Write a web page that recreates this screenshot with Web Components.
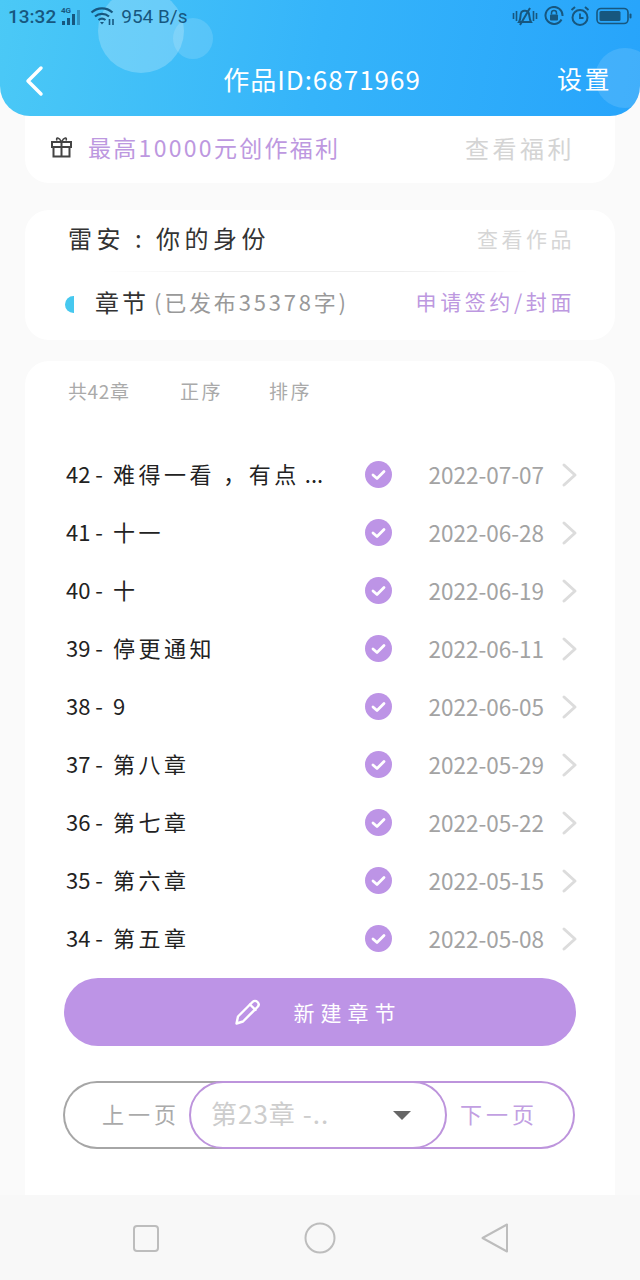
<!DOCTYPE html>
<html lang="zh">
<head>
<meta charset="utf-8">
<title>作品</title>
<style>
  html, body { margin: 0; padding: 0; background: #fafafa; }
  body {
    width: 640px;
    height: 1280px;
    overflow: hidden;
    display: flex;
    flex-direction: column;
    font-family: "Noto Sans CJK SC", "Noto Sans", sans-serif;
  }
  main { flex: 1; display: flex; flex-direction: column; min-height: 0; }
</style>
</head>
<body>
<top-bar title-text="作品ID:6871969" action="设置"></top-bar>
<main>
  <bonus-card></bonus-card>
  <work-card></work-card>
  <chapter-card>
    <chapter-row num="42 -" name="难得一看 ，有点" tail=" ..." date="2022-07-07"></chapter-row>
    <chapter-row num="41 -" name="十一" date="2022-06-28"></chapter-row>
    <chapter-row num="40 -" name="十" date="2022-06-19"></chapter-row>
    <chapter-row num="39 -" name="停更通知" date="2022-06-11"></chapter-row>
    <chapter-row num="38 -" name="9" date="2022-06-05"></chapter-row>
    <chapter-row num="37 -" name="第八章" date="2022-05-29"></chapter-row>
    <chapter-row num="36 -" name="第七章" date="2022-05-22"></chapter-row>
    <chapter-row num="35 -" name="第六章" date="2022-05-15"></chapter-row>
    <chapter-row num="34 -" name="第五章" date="2022-05-08"></chapter-row>
  </chapter-card>
</main>
<nav-bar></nav-bar>

<script>
customElements.define(
  "status-bar",
  class StatusBar extends HTMLElement {
    constructor() {
      super();
      this.attachShadow({ mode: "open" });
      this.shadowRoot.innerHTML = `
      <style>
        :host {
          display: flex;
          align-items: center;
          height: 32px;
          padding: 0 8px;
          color: #17577f;
          font: 19px Roboto, sans-serif;
        }
        .time { font-weight: 500; margin-right: 4px; }
        .speed { margin-left: 5px; }
        .right { margin-left: auto; display: flex; align-items: center; }
        svg { display: block; }
      </style>
      <span class="time">13:32</span>
      <svg width="24" height="20" viewBox="0 0 24 20">
        <text x="1" y="7" font-size="8" font-weight="700" font-family="Roboto" fill="#17577f">4G</text>
        <g fill="#17577f">
          <rect x="2" y="15" width="3" height="4"/>
          <rect x="7" y="12" width="3" height="7"/>
          <rect x="12" y="8" width="3" height="11"/>
          <rect x="17" y="4" width="3" height="15" opacity=".45"/>
        </g>
      </svg>
      <svg width="26" height="20" viewBox="0 0 26 20" fill="none" stroke="#17577f" stroke-width="2.2" style="margin-left:6px">
        <path d="M1.5 6.5C7.5 1 16.5 1 22.5 6.5"/>
        <path d="M5 10.5C9 7 15 7 19 10.5"/>
        <path d="M8.5 14C10.5 12.4 13.5 12.4 15.5 14"/>
        <path d="M12 18.5l-2-2.5h4z" fill="#17577f" stroke="none"/>
        <path d="M19.5 13v6M23 13v6" stroke-width="1.6"/>
      </svg>
      <span class="speed">954 B/s</span>
      <div class="right">
        <svg width="26" height="22" viewBox="0 0 26 22" fill="none" stroke="#17577f" stroke-width="2">
          <path d="M7 17c2-3 1-6 2-9 .8-2.600 6-3.400 7.500-.5 1.300 2.500.5 6.500 2.500 9.500z"/>
          <path d="M18 3L8 20"/>
          <path d="M1.500 8v6M4.500 6v10M21.500 6v10M24.500 8v6" stroke-width="1.600"/>
        </svg>
        <svg width="20" height="20" viewBox="0 0 20 20" fill="none" stroke="#17577f" stroke-width="2" style="margin-left:6px">
          <path d="M17.500 13.500A8.500 8.500 0 1 1 18.500 10"/>
          <rect x="6" y="8.500" width="8" height="6" rx="1" fill="#17577f" stroke="none"/>
          <path d="M7.500 8.500V7a2.500 2.500 0 0 1 5 0v1.500" stroke-width="1.500"/>
        </svg>
        <svg width="20" height="22" viewBox="0 0 20 22" fill="none" stroke="#17577f" stroke-width="2" style="margin-left:6px">
          <circle cx="10" cy="12.500" r="7.500"/>
          <path d="M10 8.500v4.500h3.500" stroke-width="1.800"/>
          <path d="M1.500 5L5 2M18.500 5L15 2"/>
        </svg>
        <svg width="36" height="18" viewBox="0 0 36 18" style="margin-left:6px;margin-right:0">
          <rect x="1" y="1.500" width="31" height="15" rx="4" fill="none" stroke="#17577f" stroke-width="1.600"/>
          <rect x="3.500" y="4" width="21" height="10" rx="1.500" fill="#17577f"/>
          <rect x="33.500" y="6.500" width="2" height="5" rx="1" fill="#17577f"/>
        </svg>
      </div>
      `;
    }
  }
);

customElements.define(
  "top-bar",
  class TopBar extends HTMLElement {
    constructor() {
      super();
      this.attachShadow({ mode: "open" });
      this.shadowRoot.innerHTML = `
      <style>
        :host {
          display: block;
          position: relative;
          z-index: 2;
          height: 116px;
          overflow: hidden;
          color: #fff;
          background: linear-gradient(100deg, #4bc9f6 0%, #35b4fa 50%, #27a4fb 100%);
          border-radius: 0 0 30px 30px;
        }
        .bubble { position: absolute; border-radius: 50%; background: rgba(255,255,255,.22); }
        .b1 { left: 98px; top: -11px; width: 86px; height: 84px; }
        .b2 { left: 173px; top: 18px; width: 40px; height: 41px; background: rgba(255,255,255,.14); }
        .b3 { left: 595px; top: 48px; width: 60px; height: 60px; background: rgba(255,255,255,.12); }
        status-bar { position: relative; }
        .nav {
          position: relative;
          box-sizing: border-box;
          display: grid;
          grid-template-columns: 1fr auto 1fr;
          align-items: center;
          height: 84px;
          padding: 14px 24px 0;
        }
        .nav svg { display: block; }
        .title { margin-left: 4px; padding-bottom: 6px; font-size: 26px; letter-spacing: 1px; white-space: nowrap; }
        .action { justify-self: end; margin-right: 4px; padding-bottom: 6px; font-size: 25px; letter-spacing: 2.500px; }
      </style>
      <span class="bubble b1"></span>
      <span class="bubble b2"></span>
      <span class="bubble b3"></span>
      <status-bar></status-bar>
      <div class="nav">
        <svg width="22" height="32" viewBox="0 0 22 32" fill="none" stroke="#fff" stroke-width="3.500" stroke-linecap="round" stroke-linejoin="round">
          <path d="M17 3L4 16l13 13"/>
        </svg>
        <span class="title">${this.getAttribute("title-text")}</span>
        <span class="action">${this.getAttribute("action")}</span>
      </div>
      `;
    }
  }
);

customElements.define(
  "bonus-card",
  class BonusCard extends HTMLElement {
    constructor() {
      super();
      this.attachShadow({ mode: "open" });
      this.shadowRoot.innerHTML = `
      <style>
        :host {
          display: flex;
          box-sizing: border-box;
          align-items: center;
          height: 67px;
          margin: 0 25px;
          padding: 0 40px 5px 26px;
          background: #fff;
          border-radius: 0 0 24px 24px;
        }
        svg { flex: none; margin-right: 16px; }
        .main { color: #bd98e0; font-size: 23px; letter-spacing: 2.300px; white-space: nowrap; }
        .more { margin-left: auto; color: #d4d4d4; font-size: 24px; letter-spacing: 3.500px; white-space: nowrap; }
      </style>
      <svg width="21" height="22" viewBox="0 0 21 22" fill="none" stroke="#444" stroke-width="2">
        <rect x="1" y="6" width="19" height="5"/>
        <path d="M2.500 11v9.500h16V11M10.500 6v14.500"/>
        <path d="M10.500 6C8 1 4.500 1 6 4.500M10.500 6C13 1 16.500 1 15 4.500" stroke-width="1.600"/>
      </svg>
      <span class="main">最高10000元创作福利</span>
      <span class="more">查看福利</span>
      `;
    }
  }
);

customElements.define(
  "work-card",
  class WorkCard extends HTMLElement {
    constructor() {
      super();
      this.attachShadow({ mode: "open" });
      this.shadowRoot.innerHTML = `
      <style>
        :host {
          display: block;
          height: 130px;
          margin: 27px 25px 21px;
          background: #fff;
          border-radius: 24px;
        }
        .line { box-sizing: border-box; display: flex; align-items: center; white-space: nowrap; }
        .one { height: 61px; padding: 0 40px 6px 43px; }
        .two { height: 68px; padding: 0 40px 10px 40px; }
        .name { color: #333; font-size: 24px; letter-spacing: 4.500px; }
        .more { margin-left: auto; color: #d6d6d6; font-size: 21px; letter-spacing: 3.500px; }
        hr {
          height: 1px;
          margin: 0 85px 0 75px;
          border: 0;
          background: linear-gradient(90deg, #fff, #eee 30%, #eee 70%, #fff);
        }
        .dot {
          flex: none;
          width: 9px;
          height: 17px;
          margin: 6px 21px 0 0;
          background: #46c8ef;
          border-radius: 9px 0 0 9px;
        }
        .chap { color: #333; font-size: 24px; letter-spacing: 3px; }
        .count { margin-left: 5px; color: #999; font-size: 22px; letter-spacing: 2.800px; }
        .apply { margin-left: auto; color: #bd98e0; font-size: 21px; letter-spacing: 3.600px; }
      </style>
      <div class="line one">
        <span class="name">雷安 : 你的身份</span>
        <span class="more">查看作品</span>
      </div>
      <hr>
      <div class="line two">
        <span class="dot"></span>
        <span class="chap">章节</span>
        <span class="count">(已发布35378字)</span>
        <span class="apply">申请签约/封面</span>
      </div>
      `;
    }
  }
);

customElements.define(
  "chapter-row",
  class ChapterRow extends HTMLElement {
    constructor() {
      super();
      this.attachShadow({ mode: "open" });
      const tail = this.getAttribute("tail") || "";
      this.shadowRoot.innerHTML = `
      <style>
        :host {
          display: grid;
          grid-template-columns: 299px 27px 1fr 18px;
          align-items: center;
          height: 58px;
          padding-left: 2px;
          white-space: nowrap;
        }
        .name { padding-bottom: 3px; color: #222; font-size: 22px; overflow: hidden; }
        .zh { margin-left: 5px; letter-spacing: 3.500px; }
        .date { color: #a3a3a3; font-size: 22.500px; text-align: right; padding-right: 14px; }
        svg { display: block; }
        .chev { margin: 2px -2px 0 2px; }
      </style>
      <span class="name">${this.getAttribute("num")} <span class="zh">${this.getAttribute("name")}</span>${tail}</span>
      <svg width="27" height="27" viewBox="0 0 27 27">
        <circle cx="13.500" cy="13.500" r="13.500" fill="#bd94e6"/>
        <path d="M8 14l4 3.500 7-7" fill="none" stroke="#fff" stroke-width="2.800" stroke-linecap="round" stroke-linejoin="round"/>
      </svg>
      <span class="date">${this.getAttribute("date")}</span>
      <svg class="chev" width="18" height="26" viewBox="0 0 18 26" fill="none" stroke="#dcdcdc" stroke-width="3" stroke-linecap="round" stroke-linejoin="round">
        <path d="M4 3l11 10L4 23"/>
      </svg>
      `;
    }
  }
);

customElements.define(
  "pager-bar",
  class PagerBar extends HTMLElement {
    constructor() {
      super();
      this.attachShadow({ mode: "open" });
      this.shadowRoot.innerHTML = `
      <style>
        :host {
          display: flex;
          height: 68px;
          width: 512px;
          white-space: nowrap;
        }
        div { box-sizing: border-box; height: 68px; display: flex; align-items: center; background: #fff; }
        .prev {
          flex: none;
          width: 191px;
          margin-right: -65px;
          padding: 0 0 5px 37px;
          color: #aaa;
          font-size: 22px;
          letter-spacing: 4px;
          border: 2px solid #a6a6a6;
          border-right: 0;
          border-radius: 34px 0 0 34px;
        }
        .select {
          position: relative;
          z-index: 1;
          flex: none;
          width: 258px;
          padding: 0 34px 0 20px;
          color: #cdcdcd;
          font-size: 26px;
          letter-spacing: 1px;
          border: 2px solid #bd94dc;
          border-radius: 34px;
        }
        .select .txt { padding-bottom: 5px; }
        .arrow {
          margin-left: auto;
          width: 0;
          height: 0;
          border: 9px solid transparent;
          border-top: 9px solid #666;
          border-bottom: 0;
        }
        .next {
          flex: none;
          width: 194px;
          margin-left: -66px;
          padding: 0 0 5px 79px;
          color: #c29fe2;
          font-size: 22px;
          letter-spacing: 4px;
          border: 2px solid #bd94dc;
          border-left: 0;
          border-radius: 0 34px 34px 0;
        }
      </style>
      <div class="prev">上一页</div>
      <div class="select"><span class="txt">第23章 -..</span><span class="arrow"></span></div>
      <div class="next">下一页</div>
      `;
    }
  }
);

customElements.define(
  "chapter-card",
  class ChapterCard extends HTMLElement {
    constructor() {
      super();
      this.attachShadow({ mode: "open" });
      this.shadowRoot.innerHTML = `
      <style>
        :host {
          display: block;
          flex: 1;
          margin: 0 25px;
          padding: 0 39px;
          background: #fff;
          border-radius: 24px 24px 0 0;
        }
        .head {
          box-sizing: border-box;
          display: flex;
          align-items: center;
          height: 62px;
          padding: 0 0 4px 4px;
          color: #aaa;
          font-size: 19px;
        }
        .head span:nth-child(1) { width: 112px; letter-spacing: .6px; }
        .head span:nth-child(2) { width: 89px; letter-spacing: 2.500px; }
        .head span:nth-child(3) { letter-spacing: 2.500px; }
        .rows { padding-top: 22px; }
        .write {
          display: flex;
          box-sizing: border-box;
          align-items: center;
          justify-content: center;
          gap: 32px;
          height: 68px;
          margin-top: 11px;
          padding-right: 5px;
          color: #fff;
          font-size: 21px;
          letter-spacing: 6px;
          background: #bd94e6;
          border-radius: 34px;
        }
        svg { display: block; }
        pager-bar { margin: 35px 0 0 -1px; }
      </style>
      <div class="head"><span>共42章</span><span>正序</span><span>排序</span></div>
      <div class="rows"><slot></slot></div>
      <div class="write">
        <svg width="28" height="28" viewBox="0 0 28 28" fill="none" stroke="#fff" stroke-width="2.400" stroke-linejoin="round" stroke-linecap="round">
          <path d="M2.500 25.500l1.500-7L18.500 4c1.500-1.500 3.500-1.500 5 0s1.500 3.500 0 5L9 23.500z"/>
          <path d="M16 6.500l5.500 5.500"/>
        </svg>
        <span>新建章节</span>
      </div>
      <pager-bar></pager-bar>
      `;
    }
  }
);

customElements.define(
  "nav-bar",
  class NavBar extends HTMLElement {
    constructor() {
      super();
      this.attachShadow({ mode: "open" });
      this.shadowRoot.innerHTML = `
      <style>
        :host {
          display: grid;
          grid-template-columns: 292px 56px 292px;
          flex: none;
          height: 85px;
          align-items: center;
          background: #f8f8f8;
        }
        svg { display: block; }
        .sq { margin-left: 132px; }
        .ci { justify-self: center; }
        .tr { margin-left: 132px; }
      </style>
      <svg class="sq" width="28" height="28" viewBox="0 0 28 28">
        <rect x="2" y="2" width="24" height="25" rx="3" fill="none" stroke="#bdbdbd" stroke-width="2"/>
      </svg>
      <svg class="ci" width="32" height="32" viewBox="0 0 32 32">
        <circle cx="16" cy="16" r="14.500" fill="none" stroke="#bdbdbd" stroke-width="2"/>
      </svg>
      <svg class="tr" width="30" height="32" viewBox="0 0 30 32" fill="none" stroke="#bdbdbd" stroke-width="2" stroke-linejoin="round">
        <path d="M27 2.500v27L2.500 16z"/>
      </svg>
      `;
    }
  }
);
</script>
</body>
</html>
